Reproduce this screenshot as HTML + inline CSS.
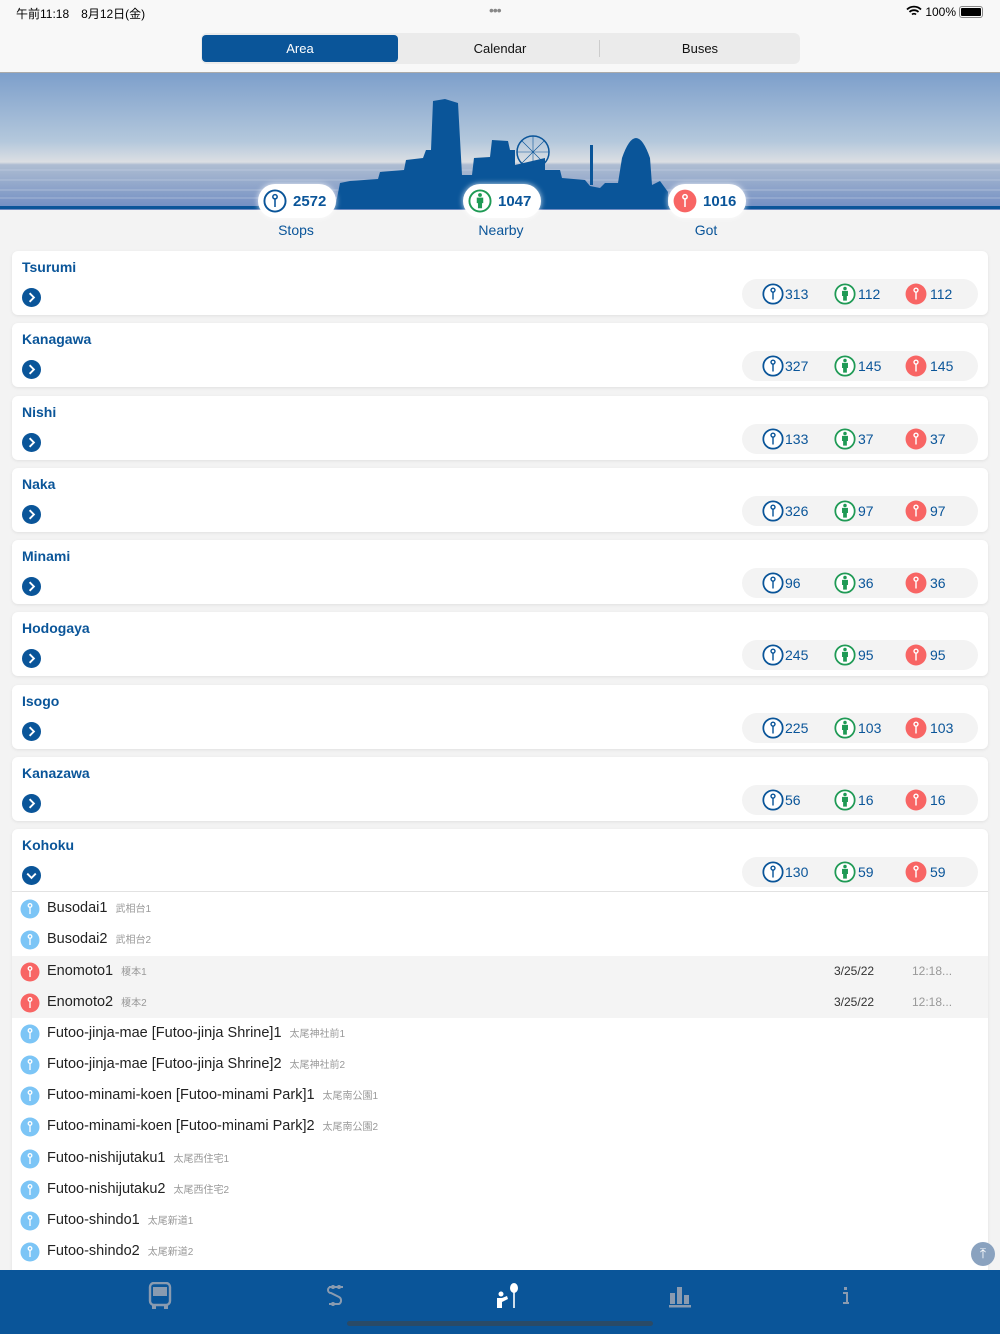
<!DOCTYPE html>
<html><head><meta charset="utf-8"><style>
*{margin:0;padding:0;box-sizing:border-box}
body{width:1000px;height:1334px;background:#f3f3f3;font-family:"Liberation Sans","Noto Sans CJK JP",sans-serif;position:relative;overflow:hidden}
.abs{position:absolute}
.status{font-size:12px;color:#000;top:5px}
.seg{left:201px;top:33px;width:599px;height:31px;background:#ebebeb;border-radius:6px}
.seg div{position:absolute;top:0;height:31px;line-height:31px;text-align:center;font-size:13px;color:#111}
.badge{top:184px;height:34px;background:#fff;border-radius:17px;box-shadow:0 0 6px rgba(255,255,255,.8);display:flex;align-items:center;padding:0 10px 0 5px;font-weight:bold;font-size:15px;color:#0a5599}
.badge svg{margin-right:6px}
.lbl{top:222px;font-size:14px;color:#0a5599;width:100px;text-align:center}
.card{left:12px;width:976px;height:64px;background:#fff;border-radius:6px;box-shadow:0 1px 3px rgba(0,0,0,.08)}
.card .t{position:absolute;left:10px;top:8px;font-weight:bold;font-size:14px;color:#0a5599}
.card .chev{position:absolute;left:10px;top:37px}
.pill{position:absolute;left:730px;top:28px;width:236px;height:30px;background:#f3f3f3;border-radius:15px;font-size:14px;color:#0a5599}
.pill span{position:absolute;top:7px}
.pill svg{position:absolute;top:4px}
.row{position:absolute;left:12px;width:976px;height:31px;font-size:14.5px;color:#222}
.row.g{background:#f4f4f4}
.row svg{position:absolute;left:8px;top:6px}
.row .n{position:absolute;left:35px;top:7px}
.row .j{font-size:10px;color:#999;margin-left:8px}
.row .d{position:absolute;left:822px;top:8px;font-size:12px;color:#333}
.row .tm{position:absolute;left:900px;top:8px;font-size:12px;color:#999}
</style></head><body>
<svg width="0" height="0" style="position:absolute">
<defs>
<symbol id="stop" viewBox="0 0 20 20"><circle cx="10" cy="10" r="8.8" fill="#fff" stroke="#0a5599" stroke-width="1.6"/><circle cx="10" cy="6.5" r="1.8" fill="none" stroke="#0a5599" stroke-width="1.3"/><line x1="10" y1="8.3" x2="10" y2="15" stroke="#0a5599" stroke-width="1.3"/></symbol>
<symbol id="near" viewBox="0 0 20 20"><circle cx="10" cy="10" r="8.8" fill="#fff" stroke="#1f9a55" stroke-width="1.6"/><circle cx="10" cy="5" r="1.6" fill="#1f9a55"/><path d="M7.3 7.2h5.4v4.6h-1v4.2h-3.4v-4.2h-1z" fill="#1f9a55"/></symbol>
<symbol id="got" viewBox="0 0 20 20"><circle cx="10" cy="10" r="9.5" fill="#f86564"/><circle cx="10" cy="6.5" r="1.8" fill="none" stroke="#fff" stroke-width="1.3"/><line x1="10" y1="8.3" x2="10" y2="15" stroke="#fff" stroke-width="1.3"/></symbol>
<symbol id="lb" viewBox="0 0 20 20"><circle cx="10" cy="10" r="9.5" fill="#7cc5f6"/><circle cx="10" cy="6.5" r="1.8" fill="none" stroke="#fff" stroke-width="1.3"/><line x1="10" y1="8.3" x2="10" y2="15" stroke="#fff" stroke-width="1.3"/></symbol>
<symbol id="chev" viewBox="0 0 20 20"><circle cx="10" cy="10" r="10" fill="#0a5599"/><path d="M8 5.5l4.5 4.5L8 14.5" fill="none" stroke="#fff" stroke-width="2"/></symbol>
<symbol id="chevd" viewBox="0 0 20 20"><circle cx="10" cy="10" r="10" fill="#0a5599"/><path d="M5.5 8l4.5 4.5L14.5 8" fill="none" stroke="#fff" stroke-width="2"/></symbol>
<linearGradient id="sky" x1="0" y1="0" x2="0" y2="1"><stop offset="0" stop-color="#7d9fcb"/><stop offset=".5" stop-color="#b4c8dc"/><stop offset=".65" stop-color="#dcdfe3"/><stop offset=".67" stop-color="#aebdd2"/><stop offset="1" stop-color="#6f8cc2"/></linearGradient>
</defs></svg>

<div class="abs" style="left:0;top:0;width:1000px;height:72px;background:#f8f8f8"></div>
<div class="abs status" style="left:16px">午前11:18　8月12日(金)</div>
<div class="abs status" style="left:489px;top:2px;color:#888;font-size:14px;letter-spacing:-1px">•••</div>
<div class="abs status" style="left:906px">
<svg width="16" height="12" viewBox="0 0 16 12" style="vertical-align:-1px"><path d="M1 4.5a10 10 0 0 1 14 0M3.5 7a6.5 6.5 0 0 1 9 0M6 9.5a3 3 0 0 1 4 0" fill="none" stroke="#000" stroke-width="1.8"/></svg> 100%</div>
<div class="abs" style="left:959px;top:6px;width:24px;height:12px;border:1px solid #888;border-radius:3px;padding:1px"><div style="width:100%;height:100%;background:#000;border-radius:1px"></div></div>
<div class="abs seg">
<div style="left:1px;top:2px;height:27px;line-height:27px;width:196px;background:#0a5599;color:#fff;border-radius:4px">Area</div>
<div style="left:200px;width:198px">Calendar</div>
<div style="left:398px;top:7px;width:1px;height:17px;background:#ccc"></div>
<div style="left:400px;width:198px">Buses</div>
</div>
<div class="abs" style="left:0;top:72px;width:1000px;height:1px;background:#aaa"></div>

<svg class="abs" style="left:0;top:73px" width="1000" height="137" viewBox="0 73 1000 137">
<rect x="0" y="73" width="1000" height="137" fill="url(#sky)"/>
<g stroke="#c9d4e6" stroke-width="1" opacity=".5"><line x1="0" y1="170" x2="1000" y2="170"/><line x1="0" y1="180" x2="1000" y2="180"/><line x1="0" y1="190" x2="1000" y2="190"/><line x1="0" y1="198" x2="1000" y2="198"/></g>
<path d="M335,208 L340,183 L350,181 L378,179 L380,172 L404,170 L406,160 L423,158 L426,150 L431,150 L433,101 L445,99 L458,103 L462,175 L472,175 L474,158 L490,157 L492,140 L508,141 L510,150 L515,150 L515,165 L545,158 L545,170 L560,170 L562,178 L585,180 L590,186 L600,188 L605,183 L618,183 L622,158 Q636,118 650,158 L652,185 L660,181 L668,192 L668,208 Z" fill="#0a5599"/>
<circle cx="533" cy="152" r="16" fill="none" stroke="#0a5599" stroke-width="1.5"/>
<g stroke="#0a5599" stroke-width=".6"><line x1="517" y1="152" x2="549" y2="152"/><line x1="533" y1="136" x2="533" y2="168"/><line x1="522" y1="141" x2="544" y2="163"/><line x1="544" y1="141" x2="522" y2="163"/></g>
<rect x="590" y="145" width="3" height="40" fill="#0a5599"/>
<rect x="0" y="206" width="1000" height="3" fill="#0a5599"/>
</svg>

<div class="abs badge" style="left:258px"><svg width="24" height="24"><use href="#stop"/></svg>2572</div>
<div class="abs badge" style="left:463px"><svg width="24" height="24"><use href="#near"/></svg>1047</div>
<div class="abs badge" style="left:668px"><svg width="24" height="24"><use href="#got"/></svg>1016</div>
<div class="abs lbl" style="left:246px">Stops</div>
<div class="abs lbl" style="left:451px">Nearby</div>
<div class="abs lbl" style="left:656px">Got</div>

<div class="abs card" style="top:251px"><div class="t">Tsurumi</div><svg class="chev" width="19" height="19"><use href="#chev"/></svg><div class="pill"><svg style="left:20px" width="22" height="22"><use href="#stop"/></svg><span style="left:43px">313</span><svg style="left:92px" width="22" height="22"><use href="#near"/></svg><span style="left:116px">112</span><svg style="left:163px" width="22" height="22"><use href="#got"/></svg><span style="left:188px">112</span></div></div>
<div class="abs card" style="top:323px"><div class="t">Kanagawa</div><svg class="chev" width="19" height="19"><use href="#chev"/></svg><div class="pill"><svg style="left:20px" width="22" height="22"><use href="#stop"/></svg><span style="left:43px">327</span><svg style="left:92px" width="22" height="22"><use href="#near"/></svg><span style="left:116px">145</span><svg style="left:163px" width="22" height="22"><use href="#got"/></svg><span style="left:188px">145</span></div></div>
<div class="abs card" style="top:396px"><div class="t">Nishi</div><svg class="chev" width="19" height="19"><use href="#chev"/></svg><div class="pill"><svg style="left:20px" width="22" height="22"><use href="#stop"/></svg><span style="left:43px">133</span><svg style="left:92px" width="22" height="22"><use href="#near"/></svg><span style="left:116px">37</span><svg style="left:163px" width="22" height="22"><use href="#got"/></svg><span style="left:188px">37</span></div></div>
<div class="abs card" style="top:468px"><div class="t">Naka</div><svg class="chev" width="19" height="19"><use href="#chev"/></svg><div class="pill"><svg style="left:20px" width="22" height="22"><use href="#stop"/></svg><span style="left:43px">326</span><svg style="left:92px" width="22" height="22"><use href="#near"/></svg><span style="left:116px">97</span><svg style="left:163px" width="22" height="22"><use href="#got"/></svg><span style="left:188px">97</span></div></div>
<div class="abs card" style="top:540px"><div class="t">Minami</div><svg class="chev" width="19" height="19"><use href="#chev"/></svg><div class="pill"><svg style="left:20px" width="22" height="22"><use href="#stop"/></svg><span style="left:43px">96</span><svg style="left:92px" width="22" height="22"><use href="#near"/></svg><span style="left:116px">36</span><svg style="left:163px" width="22" height="22"><use href="#got"/></svg><span style="left:188px">36</span></div></div>
<div class="abs card" style="top:612px"><div class="t">Hodogaya</div><svg class="chev" width="19" height="19"><use href="#chev"/></svg><div class="pill"><svg style="left:20px" width="22" height="22"><use href="#stop"/></svg><span style="left:43px">245</span><svg style="left:92px" width="22" height="22"><use href="#near"/></svg><span style="left:116px">95</span><svg style="left:163px" width="22" height="22"><use href="#got"/></svg><span style="left:188px">95</span></div></div>
<div class="abs card" style="top:685px"><div class="t">Isogo</div><svg class="chev" width="19" height="19"><use href="#chev"/></svg><div class="pill"><svg style="left:20px" width="22" height="22"><use href="#stop"/></svg><span style="left:43px">225</span><svg style="left:92px" width="22" height="22"><use href="#near"/></svg><span style="left:116px">103</span><svg style="left:163px" width="22" height="22"><use href="#got"/></svg><span style="left:188px">103</span></div></div>
<div class="abs card" style="top:757px"><div class="t">Kanazawa</div><svg class="chev" width="19" height="19"><use href="#chev"/></svg><div class="pill"><svg style="left:20px" width="22" height="22"><use href="#stop"/></svg><span style="left:43px">56</span><svg style="left:92px" width="22" height="22"><use href="#near"/></svg><span style="left:116px">16</span><svg style="left:163px" width="22" height="22"><use href="#got"/></svg><span style="left:188px">16</span></div></div>
<div class="abs card" style="top:829px;height:450px;border-radius:6px 6px 0 0"><div class="t">Kohoku</div><svg class="chev" width="19" height="19"><use href="#chevd"/></svg><div class="pill"><svg style="left:20px" width="22" height="22"><use href="#stop"/></svg><span style="left:43px">130</span><svg style="left:92px" width="22" height="22"><use href="#near"/></svg><span style="left:116px">59</span><svg style="left:163px" width="22" height="22"><use href="#got"/></svg><span style="left:188px">59</span></div>
<div style="position:absolute;left:0;top:62px;width:976px;height:1px;background:#e2e2e2"></div></div>

<div class="row" style="top:893px"><svg width="20" height="20"><use href="#lb"/></svg><div class="n">Busodai1<span class="j">武相台1</span></div></div>
<div class="row" style="top:924px"><svg width="20" height="20"><use href="#lb"/></svg><div class="n">Busodai2<span class="j">武相台2</span></div></div>
<div class="row g" style="top:956px"><svg width="20" height="20"><use href="#got"/></svg><div class="n">Enomoto1<span class="j">榎本1</span></div><div class="d">3/25/22</div><div class="tm">12:18...</div></div>
<div class="row g" style="top:987px"><svg width="20" height="20"><use href="#got"/></svg><div class="n">Enomoto2<span class="j">榎本2</span></div><div class="d">3/25/22</div><div class="tm">12:18...</div></div>
<div class="row" style="top:1018px"><svg width="20" height="20"><use href="#lb"/></svg><div class="n">Futoo-jinja-mae [Futoo-jinja Shrine]1<span class="j">太尾神社前1</span></div></div>
<div class="row" style="top:1049px"><svg width="20" height="20"><use href="#lb"/></svg><div class="n">Futoo-jinja-mae [Futoo-jinja Shrine]2<span class="j">太尾神社前2</span></div></div>
<div class="row" style="top:1080px"><svg width="20" height="20"><use href="#lb"/></svg><div class="n">Futoo-minami-koen [Futoo-minami Park]1<span class="j">太尾南公園1</span></div></div>
<div class="row" style="top:1111px"><svg width="20" height="20"><use href="#lb"/></svg><div class="n">Futoo-minami-koen [Futoo-minami Park]2<span class="j">太尾南公園2</span></div></div>
<div class="row" style="top:1143px"><svg width="20" height="20"><use href="#lb"/></svg><div class="n">Futoo-nishijutaku1<span class="j">太尾西住宅1</span></div></div>
<div class="row" style="top:1174px"><svg width="20" height="20"><use href="#lb"/></svg><div class="n">Futoo-nishijutaku2<span class="j">太尾西住宅2</span></div></div>
<div class="row" style="top:1205px"><svg width="20" height="20"><use href="#lb"/></svg><div class="n">Futoo-shindo1<span class="j">太尾新道1</span></div></div>
<div class="row" style="top:1236px"><svg width="20" height="20"><use href="#lb"/></svg><div class="n">Futoo-shindo2<span class="j">太尾新道2</span></div></div>
<div class="abs" style="left:971px;top:1242px;width:24px;height:24px;border-radius:12px;background:#8aa2bf;color:#fff;font-size:14px;text-align:center;line-height:22px">⤒</div>

<div class="abs" style="left:0;top:1270px;width:1000px;height:64px;background:#0a5599"></div>
<svg class="abs" style="left:148px;top:1282px" width="24" height="28" viewBox="0 0 24 28"><rect x="2" y="1" width="20" height="22" rx="4" fill="none" stroke="#8a9bb0" stroke-width="2.4"/><rect x="5" y="5" width="14" height="9" fill="#8a9bb0"/><rect x="4" y="22" width="4" height="5" fill="#8a9bb0"/><rect x="16" y="22" width="4" height="5" fill="#8a9bb0"/></svg>
<svg class="abs" style="left:325px;top:1284px" width="24" height="24" viewBox="0 0 24 24"><path d="M4 3h14M6 3a3 3 0 0 0 0 6l8 4a4 4 0 0 1 0 7H4" fill="none" stroke="#8a9bb0" stroke-width="2"/><circle cx="8" cy="3" r="2" fill="#8a9bb0"/><circle cx="14" cy="3" r="2" fill="#8a9bb0"/><circle cx="8" cy="20" r="2" fill="#8a9bb0"/></svg>
<svg class="abs" style="left:495px;top:1282px" width="26" height="28" viewBox="0 0 26 28"><ellipse cx="19" cy="6" rx="4" ry="5" fill="#fff"/><rect x="18.2" y="10" width="1.6" height="16" fill="#fff"/><circle cx="6" cy="12" r="2.5" fill="#fff"/><path d="M2 26v-10h5l5-2 1 3-6 3v6z" fill="#fff"/></svg>
<svg class="abs" style="left:668px;top:1284px" width="24" height="24" viewBox="0 0 24 24"><rect x="1" y="21" width="22" height="2.5" fill="#8a9bb0"/><rect x="2" y="9" width="5" height="11" fill="#8a9bb0"/><rect x="9" y="3" width="5" height="17" fill="#8a9bb0"/><rect x="16" y="11" width="5" height="9" fill="#8a9bb0"/></svg>
<svg class="abs" style="left:840px;top:1286px" width="12" height="20" viewBox="0 0 12 20"><rect x="4" y="1" width="3" height="3" fill="#8a9bb0"/><path d="M3 7h4v10h2M3 17h6" fill="none" stroke="#8a9bb0" stroke-width="2"/></svg>
<div class="abs" style="left:347px;top:1321px;width:306px;height:5px;border-radius:3px;background:#2a4a66"></div>
</body></html>
